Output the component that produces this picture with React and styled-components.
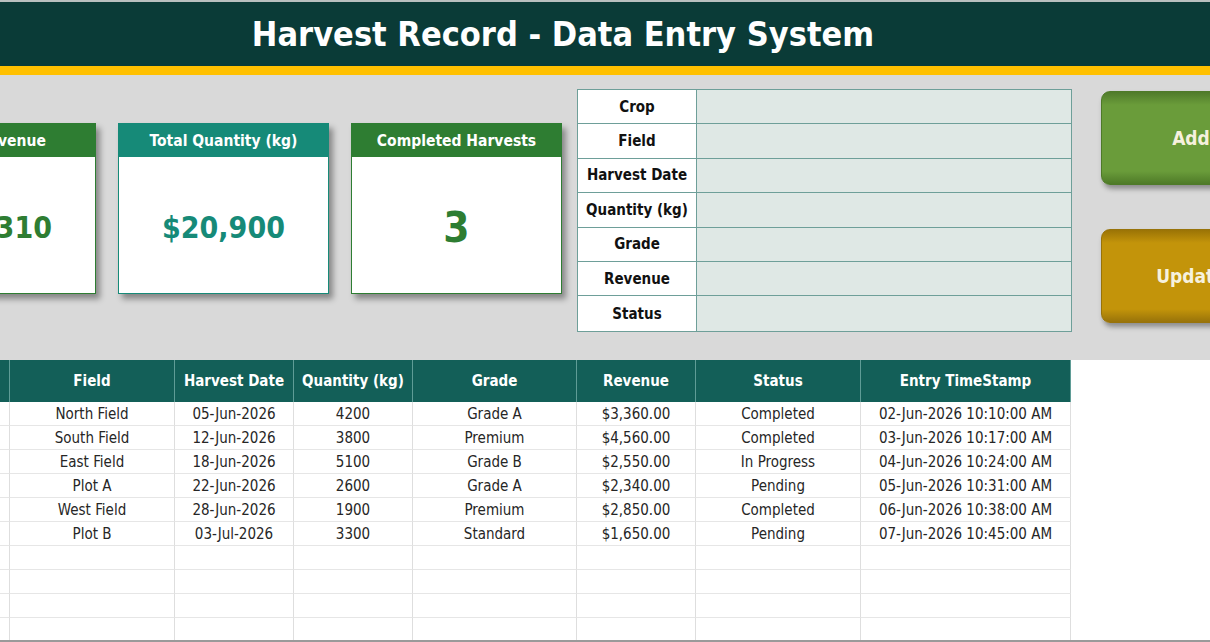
import React from 'react';
import styled, { createGlobalStyle } from 'styled-components';

const FONT = `"Liberation Sans Narrow", "DejaVu Sans Condensed", "Roboto", sans-serif`;

const GlobalStyle = createGlobalStyle`
  html, body {
    margin: 0;
    padding: 0;
    background: #ffffff;
    overflow: hidden;
  }
  body {
    font-family: ${FONT};
  }
`;

const Sheet = styled.div`
  width: 1210px;
  height: 642px;
  overflow: hidden;
  display: flex;
  flex-direction: column;
  background: #ffffff;
`;

const TopLine = styled.div`
  flex-shrink: 0;
  height: 2px;
  background: #b9c0bf;
`;

const TitleBar = styled.div`
  flex-shrink: 0;
  height: 64px;
  background: #0a3b37;
  display: flex;
  align-items: center;
  justify-content: center;
  padding-right: 84px;
`;

const Title = styled.h1`
  margin: 0;
  color: #ffffff;
  font-family: ${FONT};
  font-weight: 700;
  font-size: 34px;
`;

const Stripe = styled.div`
  flex-shrink: 0;
  height: 9px;
  background: #ffc000;
`;

const Panel = styled.div`
  flex-shrink: 0;
  height: 285px;
  background: #d9d9d9;
  display: flex;
  align-items: flex-start;
  margin-left: -115px;

  & > * {
    flex-shrink: 0;
  }
`;

const Cards = styled.div`
  display: flex;
  gap: 22px;
  margin-top: 48px;
`;

const Card = styled.div`
  width: 211px;
  height: 171px;
  display: flex;
  flex-direction: column;
  background: #ffffff;
  border: 1.5px solid ${p => p.$tone};
  box-sizing: border-box;
  box-shadow: 4px 5px 6px rgba(0, 0, 0, 0.38);
`;

const CardHead = styled.div`
  height: 33px;
  background: ${p => p.$tone};
  color: #ffffff;
  font-weight: 700;
  font-size: 15.5px;
  display: flex;
  align-items: center;
  justify-content: center;
`;

const CardValue = styled.div`
  flex: 1;
  display: flex;
  align-items: center;
  justify-content: center;
  padding-top: 4px;
  color: ${p => p.$tone};
  font-weight: 700;
  font-size: ${p => p.$size}px;
`;

const Form = styled.div`
  margin-left: 15px;
  margin-top: 14px;
  width: 495px;
  display: grid;
  grid-template-columns: 119px 1fr;
  grid-auto-rows: 34.4px;
  border: 1px solid #6e9f99;
  box-sizing: border-box;
  background: #dfe8e5;
`;

const FormLabel = styled.div`
  background: #ffffff;
  border-right: 1px solid #6e9f99;
  border-bottom: ${p => (p.$last ? 'none' : '1px solid #6e9f99')};
  display: flex;
  align-items: center;
  justify-content: center;
  font-weight: 700;
  font-size: 15px;
  color: #111;
`;

const FormInput = styled.div`
  border-bottom: ${p => (p.$last ? 'none' : '1px solid #6e9f99')};
`;

const Buttons = styled.div`
  margin-left: 29px;
  margin-top: 16px;
  display: flex;
  flex-direction: column;
  gap: 44px;
`;

const ActionButton = styled.div`
  width: 180px;
  height: 94px;
  border-radius: 9px;
  background: linear-gradient(180deg, ${p => p.$light} 0%, ${p => p.$base} 14%, ${p => p.$base} 86%, ${p => p.$dark} 100%);
  border: 1px solid ${p => p.$dark};
  box-shadow: 2px 4px 5px rgba(0, 0, 0, 0.35);
  display: flex;
  align-items: center;
  justify-content: center;
  color: #f6f1de;
  font-weight: 700;
  font-size: 19px;
  box-sizing: border-box;
`;

const Table = styled.div`
  flex-shrink: 0;
  height: 280px;
  overflow: hidden;
  margin-left: -110px;
  width: 1181px;
  display: grid;
  align-content: start;
  grid-template-columns: 120px 165px 119px 119px 164px 119px 165px 210px;
`;

const HeadCell = styled.div`
  height: 42px;
  background: #135f58;
  color: #ffffff;
  font-weight: 700;
  font-size: 15px;
  display: flex;
  align-items: center;
  justify-content: center;
  border-right: 1px solid #5f9c96;
  box-sizing: border-box;
`;

const Cell = styled.div`
  height: 24px;
  display: flex;
  align-items: center;
  justify-content: center;
  font-size: 15px;
  color: #262626;
  border-right: 1px solid #dedede;
  border-bottom: 1px solid #e6e6e6;
  box-sizing: border-box;
`;

const BottomLine = styled.div`
  flex-shrink: 0;
  height: 2px;
  background: #9a9a9a;
`;

const columns = ['Crop', 'Field', 'Harvest Date', 'Quantity (kg)', 'Grade', 'Revenue', 'Status', 'Entry TimeStamp'];

const rows = [
  ['Wheat', 'North Field', '05-Jun-2026', '4200', 'Grade A', '$3,360.00', 'Completed', '02-Jun-2026 10:10:00 AM'],
  ['Corn', 'South Field', '12-Jun-2026', '3800', 'Premium', '$4,560.00', 'Completed', '03-Jun-2026 10:17:00 AM'],
  ['Barley', 'East Field', '18-Jun-2026', '5100', 'Grade B', '$2,550.00', 'In Progress', '04-Jun-2026 10:24:00 AM'],
  ['Rice', 'Plot A', '22-Jun-2026', '2600', 'Grade A', '$2,340.00', 'Pending', '05-Jun-2026 10:31:00 AM'],
  ['Soybean', 'West Field', '28-Jun-2026', '1900', 'Premium', '$2,850.00', 'Completed', '06-Jun-2026 10:38:00 AM'],
  ['Oats', 'Plot B', '03-Jul-2026', '3300', 'Standard', '$1,650.00', 'Pending', '07-Jun-2026 10:45:00 AM'],
];

const formFields = ['Crop', 'Field', 'Harvest Date', 'Quantity (kg)', 'Grade', 'Revenue', 'Status'];

const GREEN = '#2e7d32';
const TEAL = '#168a78';

const App = () => {
  const emptyRows = 4;
  return (
    <>
      <GlobalStyle />
      <Sheet>
        <TopLine />
        <TitleBar>
          <Title>Harvest Record - Data Entry System</Title>
        </TitleBar>
        <Stripe />
        <Panel>
          <Cards>
            <Card $tone={GREEN}>
              <CardHead $tone={GREEN}>Total Revenue</CardHead>
              <CardValue $tone={GREEN} $size={30}>$17,310</CardValue>
            </Card>
            <Card $tone={TEAL}>
              <CardHead $tone={TEAL}>Total Quantity (kg)</CardHead>
              <CardValue $tone={TEAL} $size={30}>$20,900</CardValue>
            </Card>
            <Card $tone={GREEN}>
              <CardHead $tone={GREEN}>Completed Harvests</CardHead>
              <CardValue $tone={GREEN} $size={42}>3</CardValue>
            </Card>
          </Cards>
          <Form>
            {formFields.map((f, i) => (
              <React.Fragment key={f}>
                <FormLabel $last={i === formFields.length - 1}>{f}</FormLabel>
                <FormInput $last={i === formFields.length - 1} />
              </React.Fragment>
            ))}
          </Form>
          <Buttons>
            <ActionButton $light="#4f7a2a" $base="#6a9c3a" $dark="#4e7a28">Add</ActionButton>
            <ActionButton $light="#9a7306" $base="#c3940a" $dark="#98730a">Update</ActionButton>
          </Buttons>
        </Panel>
        <Table>
          {columns.map(c => (
            <HeadCell key={c}>{c}</HeadCell>
          ))}
          {rows.map((r, i) =>
            r.map((v, j) => <Cell key={`${i}-${j}`}>{v}</Cell>)
          )}
          {Array.from({ length: emptyRows }).map((_, i) =>
            columns.map((c, j) => <Cell key={`e${i}-${j}`} />)
          )}
        </Table>
        <BottomLine />
      </Sheet>
    </>
  );
};

export default App;
